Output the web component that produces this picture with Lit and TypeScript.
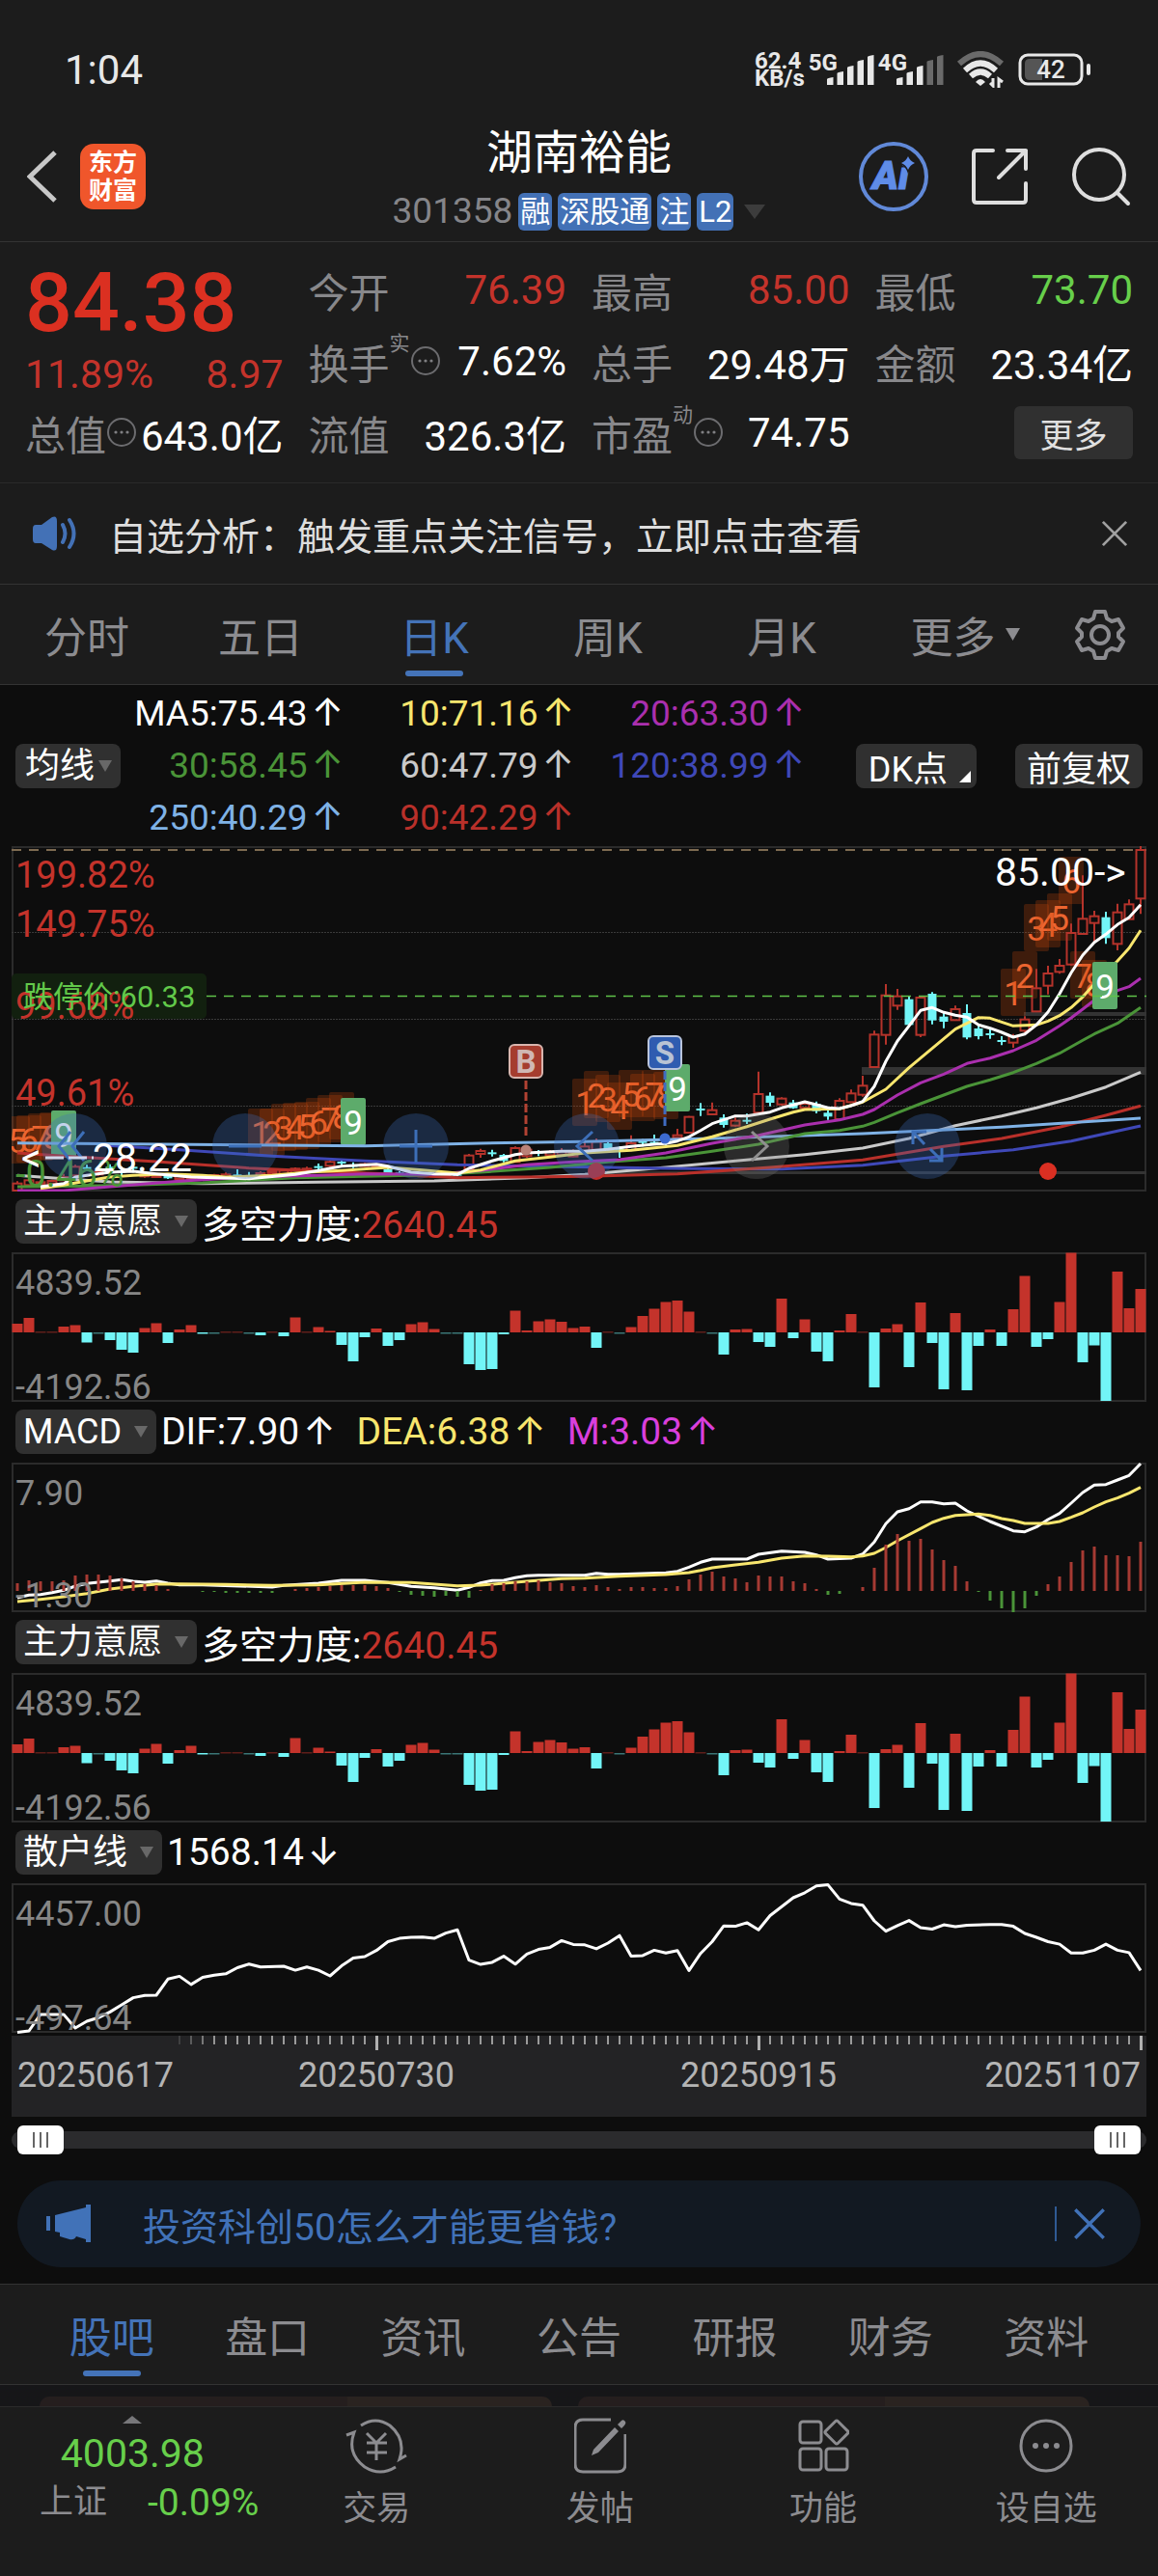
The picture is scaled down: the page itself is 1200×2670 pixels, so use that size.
import { LitElement, html, svg, css } from "lit";
import { customElement, property } from "lit/decorators.js";
import { classMap } from "lit/directives/class-map.js";

type Pt = [number, number];

const STEP = 12;
const mid = (i: number) => i * STEP + 6;

/* Bars of the capital-flow study, one per trading day, in chart units. */
const FLOW = [
  9, 15, 1, 1, 6, 7.5, -10.5, -1, -8, -18, -21, 4.5, 9.5, -11, 3, 7.5, -1.5, -1, 1, 1, -1, -3, 1, -4, 15.5, 1, 5.5, 1.5,
  -13, -30, -5, 4, -14, -8, 8.5, 10.5, 3.5, -1, -1, -33, -39, -38, -2, 22.5, 2, 11.5, 13.5, 11, 4.5, 6, -16, 1, -1, 5.5,
  17, 24.5, 31.5, 33, 21.5, 1, -1, -23, 3, 3.5, -10, -15, 35, -6, 13.5, -20, -30, 2, 19, 1, -57, 4, 8.5, -36, 31, -11,
  -59, 20, -60, -14, 3, -14, 24, 58.5, -15, -7, 31.5, 82.5, -31, -13.5, -71, 63, 25, 45,
];

const MACD_BARS = [
  8, 11, 10, 10, 11, 16, 17, 17, 16, 13, 10, 7, 6, 2, 0, 0, -1, -1, -2, -2, -2, -2, -2, 0, 2, 3, 4, 5, 6, 6, 6, 5, 3, -1,
  -4, -5, -6, -5, -6, -7, 1, 7, 8, 10, 10, 11, 9, 8, 5, 4, 6, 4, 2, 4, 4, 3, 3, 5, 12, 17, 20, 15, 13, 9, 16, 15, 15, 10,
  8, 2, -4, -3, 0, 4, 24, 48, 59, 52, 54, 43, 32, 26, 10, -1, -10, -18, -22, -18, -5, 7, 15, 30, 42, 46, 37, 37, 36, 51,
];

const flat = (values: number[], scale: number, shift: number): Pt[] => {
  const out: Pt[] = [];
  for (let k = 0; k < values.length; k += 2) out.push([mid(values[k]), values[k + 1] / scale - shift]);
  return out;
};

const DIF = flat([
  0, 1260, 1, 1252, 2, 1250, 3, 1244, 4, 1237, 5, 1224, 6, 1216, 7, 1212, 8, 1208, 9, 1204, 10, 1209, 11, 1212, 12, 1208,
  13, 1215, 14, 1220, 16, 1220, 22, 1227, 23, 1222, 26, 1215, 28, 1206, 30, 1206, 32, 1213, 34, 1225, 36, 1229, 38, 1237,
  39, 1228, 40, 1214, 41, 1207, 42, 1206, 43, 1198, 44, 1192, 45, 1190, 49, 1190, 50, 1184, 51, 1187, 52, 1187, 54, 1185,
  56, 1183, 57, 1178, 58, 1165, 59, 1150, 60, 1140, 63, 1140, 64, 1125, 66, 1115, 68, 1119, 69, 1127, 70, 1140, 72, 1137,
  73, 1124, 74, 1087, 75, 1030, 76, 993, 77, 983, 78, 962, 79, 962, 80, 968, 81, 966, 82, 990, 84, 1023, 86, 1052, 87,
  1055, 88, 1040, 89, 1017, 90, 998, 91, 966, 92, 933, 93, 910, 94, 908, 95, 894, 96, 880, 97, 843,
], 3, 280);
const DEA = flat([
  0, 1272, 2, 1265, 4, 1257, 6, 1247, 8, 1233, 10, 1225, 12, 1218, 14, 1217, 18, 1219, 22, 1222, 26, 1220, 30, 1212, 34,
  1213, 38, 1223, 40, 1221, 44, 1209, 47, 1201, 49, 1199, 52, 1193, 56, 1188, 58, 1182, 59, 1175, 60, 1167, 62, 1158, 64,
  1150, 66, 1137, 68, 1130, 70, 1131, 72, 1133, 73, 1130, 74, 1122, 75, 1104, 76, 1083, 78, 1045, 79, 1026, 80, 1013, 81,
  1004, 83, 1000, 84, 1004, 85, 1014, 86, 1020, 87, 1029, 89, 1029, 90, 1023, 91, 1010, 92, 996, 93, 978, 94, 962, 95,
  950, 96, 935, 97, 917,
], 3, 280);
const RETAIL = flat([
  0, 1177, 1, 1173, 2, 1127, 4, 1127, 5, 1165, 6, 1146, 7, 1136, 8, 1120, 9, 1100, 10, 1080, 11, 1074, 12, 1073, 13, 1028,
  14, 1020, 15, 1043, 16, 1023, 17, 1017, 18, 1013, 19, 996, 20, 986, 21, 994, 23, 992, 24, 1003, 25, 994, 26, 1003, 27,
  1019, 28, 991, 29, 969, 30, 965, 31, 948, 32, 923, 33, 914, 34, 911, 35, 910, 36, 914, 37, 899, 38, 890, 39, 975, 40,
  987, 41, 981, 42, 964, 43, 986, 44, 958, 45, 945, 46, 939, 47, 920, 48, 931, 49, 932, 50, 943, 51, 927, 52, 906, 53,
  964, 54, 962, 55, 947, 56, 955, 57, 948, 58, 1004, 59, 956, 60, 923, 61, 879, 62, 880, 63, 870, 64, 890, 65, 850, 66,
  825, 67, 800, 68, 786, 69, 767, 70, 764, 71, 804, 72, 816, 73, 821, 74, 865, 75, 894, 76, 878, 77, 864, 78, 884, 79,
  888, 80, 876, 81, 881, 82, 877, 84, 875, 85, 875, 86, 880, 87, 900, 88, 911, 89, 923, 90, 930, 91, 955, 92, 955, 93,
  947, 94, 930, 95, 947, 96, 954, 97, 1004,
], 2.703, 281);

/* Moving averages of the daily chart: index, level pairs. */
const AVERAGES: { color: string; pts: Pt[] }[] = [
  { color: "#c9c9c9", pts: flat([0, 1045, 4, 1055, 8, 1065, 16, 1070, 26, 1066, 36, 1062, 44, 1052, 49, 1042, 56, 1020, 62, 1000, 68, 980, 73, 960, 77, 930, 81, 890, 85, 860, 88, 835, 91, 805, 94, 770, 97, 724], 3, 7) },
  { color: "#3f48b8", pts: flat([7, 950, 14, 965, 22, 985, 30, 1000, 38, 1012, 46, 1017, 56, 1023, 66, 1025, 73, 1013, 80, 985, 86, 965, 91, 938, 97, 891], 3, 7) },
  { color: "#b9302a", pts: flat([0, 975, 4, 985, 12, 1002, 20, 1022, 26, 1032, 32, 1040, 38, 1052, 44, 1050, 49, 1048, 57, 1040, 65, 1020, 73, 997, 80, 955, 85, 930, 90, 895, 94, 858, 97, 829], 3, 7) },
  { color: "#7fb2e6", pts: flat([0, 944, 30, 953, 40, 945, 49, 940, 60, 930, 73, 915, 85, 895, 97, 867], 3, 7) },
  { color: "#4a9438", pts: flat([0, 1080, 6, 1078, 10, 1075, 16, 1068, 24, 1052, 34, 1045, 40, 1035, 46, 1020, 51, 1003, 56, 990, 60, 970, 64, 948, 68, 915, 71, 905, 73, 892, 74, 880, 76, 850, 78, 822, 80, 795, 82, 768, 84, 748, 86, 725, 88, 697, 90, 665, 92, 625, 93, 605, 95, 572, 97, 523], 3, 7) },
  { color: "#aa2fae", pts: flat([0, 1092, 4, 1092, 8, 1080, 14, 1063, 20, 1050, 26, 1045, 30, 1040, 36, 1042, 40, 1030, 44, 1012, 48, 1003, 52, 996, 56, 975, 60, 945, 64, 920, 68, 888, 71, 872, 73, 855, 74, 840, 76, 795, 78, 757, 80, 730, 82, 697, 84, 680, 86, 657, 88, 625, 90, 580, 91, 555, 92, 528, 93, 500, 94, 485, 95, 470, 96, 458, 97, 432], 3, 7) },
  { color: "#f8e66e", pts: flat([2, 1085, 4, 1075, 6, 1062, 8, 1050, 10, 1045, 13, 1040, 16, 1045, 18, 1050, 22, 1045, 25, 1035, 28, 1030, 32, 1020, 35, 1028, 38, 1038, 40, 1028, 43, 1000, 46, 988, 49, 975, 53, 967, 57, 952, 60, 925, 63, 893, 65, 870, 67, 848, 68, 840, 71, 838, 73, 817, 75, 777, 77, 710, 79, 650, 81, 590, 83, 554, 84, 556, 86, 580, 88, 577, 89, 565, 90, 548, 91, 523, 92, 490, 93, 450, 94, 415, 95, 378, 96, 338, 97, 283], 3, 7) },
  { color: "#ffffff", pts: flat([2, 1080, 4, 1070, 5, 1050, 6, 1045, 8, 1035, 10, 1032, 12, 1040, 15, 1050, 20, 1055, 24, 1042, 26, 1030, 28, 1016, 31, 1010, 32, 1016, 34, 1035, 36, 1040, 38, 1042, 39, 1023, 41, 1000, 43, 980, 44, 975, 47, 970, 49, 970, 51, 964, 53, 955, 55, 948, 56, 946, 57, 938, 58, 925, 59, 905, 60, 884, 61, 872, 62, 860, 63, 860, 64, 854, 65, 848, 66, 835, 67, 826, 68, 816, 69, 825, 70, 835, 71, 837, 72, 828, 73, 815, 74, 768, 75, 690, 76, 627, 77, 580, 78, 532, 79, 523, 80, 538, 81, 547, 82, 553, 83, 577, 84, 587, 85, 600, 86, 615, 87, 605, 88, 577, 89, 537, 90, 480, 91, 415, 92, 360, 93, 320, 94, 295, 95, 265, 96, 243, 97, 203], 3, 7) },
];

/* index, direction (1 up, 0 down), high, body top, body bottom, low */
const CANDLES = [
  [0, 1, 1063, 1070, 1092, 1092], [1, 1, 1055, 1060, 1075, 1080], [2, 1, 1060, 1066, 1072, 1076], [3, 1, 1058, 1062, 1070, 1074],
  [4, 1, 1040, 1050, 1060, 1062], [5, 1, 1012, 1018, 1045, 1048], [6, 0, 1012, 1019, 1024, 1030], [7, 1, 1028, 1034, 1042, 1046],
  [8, 0, 1010, 1018, 1026, 1034], [9, 0, 1018, 1030, 1034, 1046], [10, 0, 1010, 1018, 1024, 1036], [11, 1, 1036, 1042, 1048, 1052],
  [12, 1, 1038, 1044, 1050, 1052], [13, 0, 1042, 1044, 1054, 1056], [14, 1, 1044, 1048, 1056, 1058], [15, 1, 1046, 1050, 1056, 1060],
  [16, 1, 1044, 1050, 1054, 1058], [17, 1, 1040, 1044, 1050, 1054], [18, 1, 1036, 1042, 1050, 1052], [19, 0, 1026, 1042, 1047, 1056],
  [20, 0, 1034, 1044, 1048, 1056], [21, 1, 1032, 1038, 1046, 1050], [22, 1, 1026, 1032, 1038, 1042], [23, 1, 1026, 1030, 1040, 1042],
  [24, 1, 1020, 1024, 1038, 1040], [25, 1, 1018, 1024, 1034, 1036], [26, 0, 1008, 1016, 1021, 1030], [27, 1, 998, 1003, 1015, 1019],
  [28, 0, 994, 1002, 1007, 1014], [29, 0, 1004, 1012, 1016, 1022], [30, 1, 1006, 1010, 1016, 1018], [31, 1, 1008, 1012, 1018, 1022],
  [32, 0, 1022, 1026, 1040, 1044], [33, 0, 1032, 1036, 1042, 1046], [34, 1, 1034, 1040, 1046, 1048], [35, 1, 1036, 1042, 1048, 1050],
  [36, 1, 1038, 1042, 1048, 1050], [37, 1, 1034, 1038, 1046, 1048], [38, 0, 1034, 1038, 1046, 1048], [39, 1, 978, 983, 1025, 1028],
  [40, 1, 962, 969, 978, 990], [41, 0, 965, 973, 978, 986], [42, 0, 978, 981, 1000, 1004], [43, 1, 955, 960, 1003, 1005],
  [44, 1, 955, 965, 985, 990], [45, 0, 966, 971, 976, 985], [46, 1, 966, 972, 982, 984], [47, 1, 960, 970, 980, 984],
  [48, 1, 964, 974, 986, 988], [49, 1, 935, 955, 968, 972], [50, 1, 930, 940, 965, 970], [51, 0, 938, 945, 964, 970],
  [52, 0, 955, 962, 968, 990], [53, 1, 920, 945, 966, 970], [54, 0, 932, 938, 943, 955], [55, 0, 918, 941, 948, 950],
  [56, 0, 925, 935, 945, 950], [57, 1, 900, 920, 928, 934], [58, 1, 860, 863, 912, 914], [59, 0, 820, 837, 843, 860],
  [60, 1, 818, 842, 855, 858], [61, 0, 855, 865, 888, 896], [62, 1, 865, 875, 890, 893], [63, 0, 853, 872, 877, 885],
  [64, 1, 722, 792, 850, 850], [65, 0, 787, 797, 819, 830], [66, 1, 802, 806, 824, 828], [67, 0, 810, 818, 836, 838],
  [68, 1, 815, 822, 835, 838], [69, 0, 815, 822, 845, 852], [70, 0, 840, 850, 862, 872], [71, 1, 805, 813, 870, 875],
  [72, 1, 778, 790, 817, 820], [73, 1, 735, 766, 794, 800], [74, 1, 595, 607, 708, 710], [75, 1, 450, 485, 608, 638],
  [76, 1, 465, 488, 517, 530], [77, 0, 487, 497, 577, 577], [78, 1, 490, 492, 608, 615], [79, 0, 475, 480, 563, 575],
  [80, 0, 535, 551, 567, 587], [81, 1, 517, 528, 562, 563], [82, 0, 513, 540, 616, 622], [83, 0, 575, 588, 612, 622],
  [84, 0, 590, 603, 608, 620], [85, 0, 612, 624, 630, 640], [86, 1, 605, 612, 632, 648], [87, 1, 550, 560, 595, 600],
  [88, 1, 403, 463, 535, 537], [89, 1, 393, 417, 455, 482], [90, 1, 372, 393, 412, 418], [91, 1, 262, 291, 389, 392],
  [92, 1, 112, 247, 294, 296], [93, 1, 222, 239, 260, 318], [94, 0, 225, 242, 307, 325], [95, 1, 200, 227, 325, 345],
  [96, 1, 187, 202, 248, 250], [97, 1, 20, 33, 184, 232],
];

/* Nine-turn counts: first candle, first digit, top of each plate. */
const RUNS = [
  { start: 0, digit: 5, tops: [280, 279, 277, 276, 274] },
  { start: 21, digit: 1, tops: [272, 272, 267, 266, 265, 261, 258, 255, 261] },
  { start: 49, digit: 1, tops: [241, 233, 237, 245, 232, 236, 232, 234, 226] },
  { start: 86, digit: 1, tops: [127, 109, 60, 56, 49, 11, 109, 118] },
];

const line = (pts: Pt[], color: string, width = 3) =>
  svg`<polyline points=${pts.map(([x, y]) => `${x},${y.toFixed(1)}`).join(" ")} fill="none" stroke=${color} stroke-width=${width} stroke-linejoin="round"/>`;

const RED = "#c4332b";
const CYAN = "#72f5f7";

const chartText = css`
  :host { display: block; }
  svg { display: block; width: 100%; height: auto; overflow: visible; }
  .frame { fill: none; stroke: #2b2b2b; stroke-width: 2; }
  .lbl { font-size: 36px; fill: #868686; }
`;

@customElement("day-chart")
class DayChart extends LitElement {
  static styles = [
    chartText,
    css`
      .grid { stroke: #3a3a3a; stroke-width: 1; stroke-dasharray: 2 1; }
      .pct { font-size: 38px; fill: #c4332b; }
      .down { fill: #4a9438; }
      .mark { font-size: 41px; fill: #fff; }
      .limit { font-size: 31px; fill: #62c94a; }
      .turn { font-size: 35px; text-anchor: middle; fill: #ec6530; }
      .nine { fill: #fff; }
      .flag { font-size: 33px; font-weight: 700; text-anchor: middle; }
      .ctl { fill: none; stroke: #3d6fb8; stroke-width: 3; }
      .off { stroke: #8f8f8f; }
    `,
  ];

  private candle([i, up, h, t, b, l]: number[]) {
    const y = (v: number) => v / 3 - 7;
    const x = mid(i);
    const body = Math.max(y(b) - y(t), 2);
    return up
      ? svg`<path d="M${x} ${y(h)}V${y(t)}M${x} ${y(t) + body}V${y(l)}" stroke="#b5332b" stroke-width="2"/>
          <rect x=${x - 4.5} y=${y(t)} width="9" height=${body} fill="none" stroke="#b5332b" stroke-width="2"/>`
      : svg`<path d="M${x} ${y(h)}V${y(l)}" stroke=${CYAN} stroke-width="2"/>
          <rect x=${x - 4.5} y=${y(t)} width="9" height=${body} fill=${CYAN}/>`;
  }

  private run(r: { start: number; digit: number; tops: number[] }) {
    return r.tops.map((top, k) => {
      const n = r.digit + k;
      const x = mid(r.start + k);
      return svg`<rect x=${x - 13} y=${top} width="26" height="49" rx="2" fill=${n === 9 ? "#5dab6b" : "rgba(205,72,12,.26)"}/>
        <text class=${n === 9 ? "turn nine" : "turn"} x=${x} y=${top + 38}>${n}</text>`;
    });
  }

  render() {
    return html`<svg viewBox="0 0 1176 358" role="img" aria-label="日K">
      <clipPath id="box"><rect x="0" y="0" width="1176" height="358"/></clipPath>
      <rect class="frame" x="1" y="1" width="1174" height="356"/>
      <path class="grid" d="M0 89.500H1176M0 179.500H1176M0 269.500H1176"/>
      <path d="M0 4H1176" stroke="#7d6a50" stroke-width="2" stroke-dasharray="10 8"/>
      <g clip-path="url(#box)">
        <path d="M881 233H1176" stroke="#333" stroke-width="8"/>
        <path d="M1049 174H1176" stroke="#333" stroke-width="4"/>
        <path d="M606 338.500H1176" stroke="#333" stroke-width="3"/>
        ${RUNS.map((r) => this.run(r))}
        ${CANDLES.map((c) => this.candle(c))}
        ${AVERAGES.map((a) => line(a.pts, a.color))}
        <rect x="1120" y="120" width="26" height="49" rx="2" fill="#5dab6b"/>
        <text class="turn nine" x="1133" y="158">9</text>
      </g>
      <rect x="0" y="132" width="202" height="47" rx="5" fill="#12200f"/>
      <text class="pct" x="4" y="43">199.82%</text>
      <text class="pct" x="4" y="94">149.75%</text>
      <text class="pct" x="4" y="179">99.68%</text>
      <text class="pct" x="4" y="269">49.61%</text>
      <text class="pct down" x="4" y="353">-0.46%</text>
      <text class="limit" x="12" y="167">跌停价:60.33</text>
      <path d="M202 155.500H1176" stroke="#5fc24a" stroke-width="1.500" stroke-dasharray="10 8"/>
      <text class="mark" x="1019" y="41">85.00-&gt;</text>

      <path d="M533 243V300" stroke="#b24233" stroke-width="3" stroke-dasharray="9 3"/>
      <circle cx="533" cy="315" r="5.500" fill="#b98278"/>
      <rect x="516" y="206" width="34" height="34" rx="5" fill="#a53d2f" stroke="#d8b5ae" stroke-width="2"/>
      <text class="flag" x="533" y="235" fill="#d0b8b4">B</text>
      <path d="M677 233V290" stroke="#3f6bc0" stroke-width="3" stroke-dasharray="9 3"/>
      <circle cx="677" cy="303" r="5.500" fill="#3c6ad0"/>
      <rect x="660" y="197" width="34" height="34" rx="5" fill="#2f5cb0" stroke="#b9c4dc" stroke-width="2"/>
      <text class="flag" x="677" y="226" fill="#b9c3d4">S</text>

      <circle cx="606" cy="337" r="9" fill="#c32c2a"/>
      <circle cx="1074" cy="337" r="9" fill="#da2f22"/>
      ${[65, 242, 419, 596, 772, 949].map(
        (x) => svg`<circle cx=${x} cy="311" r="34" fill=${x === 772 ? "rgba(130,130,130,.26)" : "rgba(58,108,190,.3)"}/>`
      )}
      <path class="ctl" d="M61 296 49 311 61 326M75 296 63 311 75 326"/>
      <path class="ctl" d="M225 311H259"/>
      <path class="ctl" d="M402 311H436M419 294V328"/>
      <path class="ctl" d="M602 296 586 311 602 326"/>
      <path class="ctl off" d="M767 296 783 311 767 326"/>
      <path class="ctl" d="M934 309V296H948M935 297 946 309M964 313V326H951M963 325 952 314"/>
      <text class="mark" x="10" y="337">&lt;</text>
      <path d="M35 323H85" stroke="#cfd6ea" stroke-width="3" stroke-dasharray="19 5"/>
      <text class="mark" x="84" y="337">28.22</text>
    </svg>`;
  }
}

@customElement("flow-chart")
class FlowChart extends LitElement {
  static styles = chartText;
  render() {
    return html`<svg viewBox="0 0 1176 155" role="img" aria-label="多空力度">
      <rect class="frame" x="1" y="1" width="1174" height="153"/>
      ${FLOW.map((v, i) => {
        const dim = Math.abs(v) <= 1;
        return svg`<rect x=${i * STEP + 0.5} y=${v > 0 ? 83 - v : 83} width="11" height=${dim ? 1.5 : Math.abs(v)}
          fill=${v > 0 ? RED : CYAN} opacity=${dim ? 0.45 : 1}/>`;
      })}
      <text class="lbl" x="4" y="44">4839.52</text>
      <text class="lbl" x="4" y="152">-4192.56</text>
    </svg>`;
  }
}

@customElement("macd-chart")
class MacdChart extends LitElement {
  static styles = chartText;
  render() {
    return html`<svg viewBox="0 0 1176 155" role="img" aria-label="MACD">
      <rect class="frame" x="1" y="1" width="1174" height="153"/>
      ${line(DIF, "#fff")} ${line(DEA, "#f8e66e")}
      ${MACD_BARS.map(
        (v, i) => svg`<rect x=${mid(i) - 1.5} y=${v > 0 ? 133 - v : 133} width="3" height=${Math.abs(v)} fill=${v > 0 ? "#a63a33" : "#4a9438"}/>`
      )}
      <text class="lbl" x="4" y="44">7.90</text>
      <text class="lbl" x="4" y="150">-1.30</text>
    </svg>`;
  }
}

@customElement("retail-chart")
class RetailChart extends LitElement {
  static styles = chartText;
  render() {
    return html`<svg viewBox="0 0 1176 155" role="img" aria-label="散户线">
      <rect class="frame" x="1" y="1" width="1174" height="153"/>
      ${line(RETAIL, "#fff")}
      <text class="lbl" x="4" y="44">4457.00</text>
      <text class="lbl" x="4" y="152">-497.64</text>
    </svg>`;
  }
}

@customElement("date-axis")
class DateAxis extends LitElement {
  static styles = [chartText, css`.date { font-size: 36px; fill: #b4b4b4; } .m { text-anchor: middle; } .e { text-anchor: end; }`];
  render() {
    const ticks = Array.from({ length: 84 }, (_, k) => k + 14);
    return html`<svg viewBox="0 0 1176 84" role="img" aria-label="日期">
      <rect width="1176" height="84" fill="#232325"/>
      ${ticks.map((i) => {
        const major = i === 31 || i === 64 || i === 97;
        return svg`<rect x=${mid(i) - 1} y="0" width=${major ? 3 : 2} height=${major ? 15 : 9} fill="#b0b0b0" opacity=${major ? 1 : Math.min(0.85, (i - 13) * 0.2)}/>`;
      })}
      <text class="date" x="6" y="53">20250617</text>
      <text class="date m" x="378" y="53">20250730</text>
      <text class="date m" x="774" y="53">20250915</text>
      <text class="date e" x="1170" y="53">20251107</text>
    </svg>`;
  }
}

@customElement("study-picker")
class StudyPicker extends LitElement {
  @property() name = "";
  @property({ type: Boolean, reflect: true }) tight = false;
  static styles = css`
    :host { display: inline-grid; align-items: center; }
    select, svg { grid-area: 1 / 1; }
    select {
      appearance: none; border: 0; margin: 0; height: 46px; padding: 0 35px 0 8px; border-radius: 8px;
      background: #303030; color: #fff; font: inherit; font-size: 36px;
    }
    :host([tight]) select { padding: 0 26px 0 10px; }
    svg { justify-self: end; width: 14px; height: 12px; margin-right: 9px; pointer-events: none; }
  `;
  render() {
    return html`<select aria-label="指标"><option>${this.name}</option></select>
      <svg viewBox="0 0 14 12"><path d="M0 0H14L7 12Z" fill="#686868"/></svg>`;
  }
}

const cross = (size: number, color: string, w: number) => html`<svg width=${size} height=${size} viewBox="0 0 30 30">
  <path d="M2 2 28 28M28 2 2 28" fill="none" stroke=${color} stroke-width=${w}/></svg>`;
const info = html`<svg class="info" width="32" height="32" viewBox="0 0 32 32"><circle cx="16" cy="16" r="14" fill="none" stroke="#6c6c6f" stroke-width="2"/>
  <circle cx="10" cy="16" r="1.600" fill="#808083"/><circle cx="16" cy="16" r="1.600" fill="#808083"/><circle cx="22" cy="16" r="1.600" fill="#808083"/></svg>`;

const signal = (lit: number) => html`<svg width="49" height="32" viewBox="0 0 49 32">
  ${[8, 14, 20, 26, 31].map(
    (h, i) => svg`<path d="M${i * 10.5} 32V${34 - h}Q${i * 10.5} ${33 - h} ${i * 10.5 + 6.5} ${32 - h}V32Z" fill=${i < lit ? "#e8e8e8" : "#6a6a6a"}/>`
  )}</svg>`;

@customElement("app-root")
class AppRoot extends LitElement {
  static styles = css`
    :host {
      display: block; background: #0d0d0d; color: #fff;
      font-family: Roboto, "Noto Sans CJK SC", sans-serif; font-size: 39px;
    }
    * { box-sizing: border-box; }
    svg { display: block; flex: none; }
    button, a { font: inherit; color: inherit; background: none; border: 0; padding: 0; margin: 0; text-decoration: none; }
    h1, p, dl, dd, dt { margin: 0; font-weight: 400; }
    .row { display: flex; align-items: center; }
    .panel { background: #1c1c1c; }

    .status { padding: 48px 69px 0 67px; height: 96px; color: #e8e8e8; justify-content: space-between; }
    .clock { font-size: 42px; }
    .sys { gap: 4px; font-weight: 700; font-size: 24px; line-height: 18px; }
    .cell { display: flex; align-items: flex-end; }
    .gen { align-self: flex-start; margin-right: -11px; }
    .wifi { margin: 0 10px 0 9px; }

    .head {
      display: grid; grid-template-columns: 1fr auto 1fr; align-items: center;
      padding: 27px 28px 7px; border-bottom: 1px solid #333;
    }
    .left { gap: 24px; }
    .brand {
      width: 68px; height: 68px; border-radius: 14px; background: #f0562b; font-weight: 700; font-size: 25px;
      line-height: 29px; padding: 5px 0; text-align: center;
    }
    h1 { font-size: 48px; line-height: 72px; text-align: center; }
    .code { gap: 6px; line-height: 48px; font-size: 37px; color: #858589; }
    .tag { background: #4371b6; color: #fff; border-radius: 6px; font-size: 31px; line-height: 39px; padding: 0 2px; }
    .caret { margin-left: 5px; }
    .right { gap: 44px; justify-content: flex-end; }

    .quote {
      display: grid; grid-template-columns: repeat(4, 1fr); grid-auto-rows: 74px; column-gap: 26px;
      padding: 12px 26px 15px; border-bottom: 1px solid #2a2a2a; font-size: 42px;
    }
    .last { grid-row: span 2; color: #db3021; }
    .price { font-size: 86px; font-weight: 500; line-height: 102px; }
    .change { display: flex; justify-content: space-between; line-height: 46px; color: #c4332b; font-size: 41px; }
    .item { display: flex; align-items: center; justify-content: space-between; white-space: nowrap; }
    .item dt { display: flex; align-items: center; color: #88888b; }
    .sup { font-size: 21px; align-self: flex-start; line-height: 24px; }
    .up { color: #c4332b; }
    .dn { color: #67cf4b; }
    .more { justify-self: end; align-self: center; width: 123px; height: 55px; border-radius: 6px; background: #303030; font-size: 35px; color: #e0e0e0; }

    .notice { height: 105px; padding: 0 31px 0 34px; border-bottom: 1px solid #333; gap: 33px; color: #dedede; }
    .grow { flex: 1; }

    .tabs { display: grid; grid-template-columns: repeat(6, 3fr) 2fr; height: 104px; border-bottom: 1px solid #333; font-size: 44px; color: #8c8c90; }
    .tab { display: flex; align-items: center; justify-content: center; gap: 10px; position: relative; white-space: nowrap; }
    .wide { padding-left: 20px; }
    .on { color: #4473b8; }
    .on::after { content: ""; position: absolute; left: calc(50% - 30px); bottom: 8px; width: 60px; height: 6px; border-radius: 3px; background: #4473b8; }

    .legend { padding: 3px 16px 2px; }
    .mas { flex: 0 1 709px; display: grid; grid-template-columns: 231fr 239fr 239fr; font-size: 37px; line-height: 54px; text-align: right; white-space: nowrap; }
    .arrow { font-family: Inter, "Liberation Sans", sans-serif; font-size: 40px; line-height: 1; margin-left: 4px; }
    .opts { flex: 1; display: flex; justify-content: flex-end; gap: 40px; }
    .chip { height: 46px; border-radius: 8px; background: #303030; font-size: 36px; padding: 0 12px; white-space: nowrap; display: flex; align-items: center; }
    .dk { padding: 0 6px 0 13px; gap: 12px; }
    .dk svg { align-self: flex-end; margin-bottom: 6px; }

    .charts { padding: 0 12px; }
    .study { padding: 8px 4px 9px; gap: 5px; height: 63px; white-space: nowrap; }
    .vals { display: flex; gap: 22px; }
    .axis { padding-top: 3px; }

    .scrub { display: grid; align-items: center; margin: 9px 12px 0; }
    .scrub::before { content: ""; grid-area: 1 / 1; height: 18px; border-radius: 9px; background: #2b2b2d; }
    .scrub input { grid-area: 1 / 1; appearance: none; background: none; margin: 0 6px; height: 30px; pointer-events: none; }
    .scrub input::-webkit-slider-thumb {
      appearance: none; width: 48px; height: 30px; border-radius: 6px; pointer-events: auto; border: 0;
      background:
        linear-gradient(#666, #666) 16px 7px / 2px 16px no-repeat,
        linear-gradient(#666, #666) 23px 7px / 2px 16px no-repeat,
        linear-gradient(#666, #666) 30px 7px / 2px 16px no-repeat, #fff;
    }

    .promo { margin: 27px 18px 17px; height: 90px; border-radius: 45px; background: #121922; color: #4172b8; padding: 0 36px 0 30px; }
    .promo a { flex: 1; display: flex; align-items: center; gap: 54px; }
    .promo button { border-left: 2px solid #2f5a94; padding-left: 17px; height: 36px; }

    .forum { display: grid; grid-template-columns: repeat(7, 1fr); height: 105px; padding: 0 35px; border-top: 1px solid #333; border-bottom: 1px solid #333; font-size: 44px; color: #8c8c90; }
    .peek { display: grid; grid-template-columns: 1fr 1fr; gap: 27px; padding: 12px 71px 0 41px; background: #161618; }
    .card { height: 10px; border-radius: 20px 20px 0 0; background: linear-gradient(90deg, #251e1e 60%, #2a2320 60%); }

    .nav { display: grid; grid-template-columns: 19fr repeat(4, 16fr); height: 176px; border-top: 1px solid #2a2a2a; color: #8c8c90; font-size: 35px; }
    .index { padding-top: 8px; display: flex; flex-direction: column; align-items: center; }
    .point { color: #67cf4b; font-size: 41px; line-height: 62px; }
    .pair { align-self: stretch; display: flex; padding-left: 41px; gap: 42px; line-height: 40px; white-space: nowrap; }
    .pct { color: #67cf4b; font-size: 39px; }
    .act { display: flex; flex-direction: column; align-items: center; padding-top: 11px; gap: 12px; line-height: 50px; }
  `;

  private quoteItem(label: string, value: string, tone = "", sup = "", dots = false) {
    return html`<div class="item"><dt>${label}${sup ? html`<span class="sup">${sup}</span>` : ""}${dots ? info : ""}</dt>
      <dd class=${tone}>${value}</dd></div>`;
  }

  private level(text: string, color: string, arrow = "↑") {
    return html`<span style="color:${color}">${text}<span class="arrow">${arrow}</span></span>`;
  }

  render() {
    return html`
      <div class="panel">
        <div class="status row">
          <span class="clock">1:04</span>
          <div class="sys row">
            <span>62.4<br />KB/s</span>
            <span class="cell"><span class="gen">5G</span>${signal(5)}</span>
            <span class="cell"><span class="gen">4G</span>${signal(3)}</span>
            <svg class="wifi" width="50" height="38" viewBox="0 0 50 38" fill="none" stroke-width="6">
              <path d="M3 13Q25 -7 47 13" stroke="#6a6a6a"/>
              <path d="M9 20Q25 5 41 20" stroke="#e8e8e8"/>
              <path d="M15 26Q25 17 35 26" stroke="#e8e8e8"/>
              <path d="M20 32Q25 26 30 32L25 36Z" fill="#e8e8e8"/>
              <path d="M38 28V36L35 33M44 38V29L48 32" stroke="#e8e8e8" stroke-width="3"/>
            </svg>
            <svg width="76" height="34" viewBox="0 0 76 34">
              <rect x="2" y="2" width="64" height="30" rx="8" fill="none" stroke="#e8e8e8" stroke-width="3"/>
              <path d="M12 6H25V28H12Q7 28 7 23V11Q7 6 12 6Z" fill="#555"/>
              <rect x="71" y="11" width="4" height="12" rx="2" fill="#e8e8e8"/>
              <text x="34" y="26" text-anchor="middle" font-size="26" font-weight="500" fill="#e8e8e8">42</text>
            </svg>
          </div>
        </div>

        <header class="head">
          <div class="left row">
            <button aria-label="返回"><svg width="31" height="56" viewBox="0 0 31 56"><path d="M29 3 3 28 29 53" fill="none" stroke="#c8c8c8" stroke-width="5"/></svg></button>
            <div class="brand">东方<br />财富</div>
          </div>
          <div>
            <h1>湖南裕能</h1>
            <div class="code row">
              <span>301358</span><span class="tag">融</span><span class="tag">深股通</span><span class="tag">注</span><span class="tag">L2</span>
              <svg class="caret" width="22" height="15" viewBox="0 0 22 15"><path d="M0 0H22L11 15Z" fill="#3c3c3c"/></svg>
            </div>
          </div>
          <div class="right row">
            <button aria-label="Ai"><svg width="72" height="72" viewBox="0 0 72 72">
              <circle cx="36" cy="36" r="34" fill="none" stroke="#6189d8" stroke-width="4"/>
              <text x="33" y="49" text-anchor="middle" font-size="41" font-weight="900" font-style="italic" fill="#5f8ce8" stroke="#5f8ce8">Ai</text>
              <path d="M51 15Q53 20 58 22Q53 24 51 29Q49 24 44 22Q49 20 51 15Z" fill="#5f8ce8" stroke="#1c1c1c" stroke-width="3" paint-order="stroke"/>
            </svg></button>
            <button aria-label="分享"><svg width="60" height="60" viewBox="0 0 60 60" fill="none" stroke="#dedede" stroke-width="4" stroke-linecap="round" stroke-linejoin="round">
              <path d="M23 3H6Q3 3 3 6V54Q3 57 6 57H54Q57 57 57 54V37M38 3H57V22M57 3 29 31"/></svg></button>
            <button aria-label="搜索"><svg width="62" height="62" viewBox="0 0 62 62" fill="none" stroke="#dedede" stroke-width="4" stroke-linecap="round">
              <circle cx="29" cy="29" r="26"/><path d="M48 48 59 59"/></svg></button>
          </div>
        </header>

        <dl class="quote">
          <div class="last">
            <dd class="price">84.38</dd>
            <dd class="change"><span>11.89%</span><span>8.97</span></dd>
          </div>
          ${this.quoteItem("今开", "76.39", "up")} ${this.quoteItem("最高", "85.00", "up")} ${this.quoteItem("最低", "73.70", "dn")}
          ${this.quoteItem("换手", "7.62%", "", "实", true)} ${this.quoteItem("总手", "29.48万")} ${this.quoteItem("金额", "23.34亿")}
          ${this.quoteItem("总值", "643.0亿", "", "", true)} ${this.quoteItem("流值", "326.3亿")} ${this.quoteItem("市盈", "74.75", "", "动", true)}
          <button class="more">更多</button>
        </dl>

        <div class="notice row">
          <svg width="46" height="36" viewBox="0 0 46 36"><path d="M3 9H9L20 1Q25 -1 25 5V31Q25 37 20 35L9 28H3Q0 28 0 24V13Q0 9 3 9Z" fill="#4371b6"/>
            <path d="M31 9Q36 18 31 27M38 4Q47 18 38 32" fill="none" stroke="#4371b6" stroke-width="4" stroke-linecap="round"/></svg>
          <span class="grow">自选分析：触发重点关注信号，立即点击查看</span>
          <button aria-label="关闭">${cross(28, "#a0a0a0", 3)}</button>
        </div>

        <nav class="tabs">
          ${["分时", "五日", "日K", "周K", "月K"].map((t) => html`<a href="#" class=${classMap({ tab: true, on: t === "日K" })}>${t}</a>`)}
          <a href="#" class="tab wide">更多<svg width="15" height="13" viewBox="0 0 15 13"><path d="M0 0H15L7.500 13Z" fill="#8c8c90"/></svg></a>
          <button class="tab" aria-label="设置"><svg width="54" height="54" viewBox="0 0 54 54" fill="none" stroke="#8c8c90" stroke-width="4" stroke-linejoin="round">
            <path d="M22 3H32L34 10L39 13L46 11L51 20L46 25V29L51 34L46 43L39 41L34 44L32 51H22L20 44L15 41L8 43L3 34L8 29V25L3 20L8 11L15 13L20 10Z"/>
            <circle cx="27" cy="27" r="9"/></svg></button>
        </nav>
      </div>

      <div class="legend row">
        <study-picker tight name="均线"></study-picker>
        <div class="mas">
          ${this.level("MA5:75.43", "#ffffff")} ${this.level("10:71.16", "#f8e66e")} ${this.level("20:63.30", "#aa2fae")}
          ${this.level("30:58.45", "#4a9438")} ${this.level("60:47.79", "#c9c9c9")} ${this.level("120:38.99", "#3f48b8")}
          ${this.level("250:40.29", "#7fb2e6")} ${this.level("90:42.29", "#b9302a")}
        </div>
        <div class="opts">
          <button class="chip dk">DK点<svg width="12" height="12" viewBox="0 0 12 12"><path d="M12 0V12H0Z" fill="#fff"/></svg></button>
          <button class="chip">前复权</button>
        </div>
      </div>

      <main class="charts">
        <day-chart></day-chart>
        <div class="study row"><study-picker name="主力意愿"></study-picker><span>多空力度:<span class="up">2640.45</span></span></div>
        <flow-chart></flow-chart>
        <div class="study row"><study-picker name="MACD"></study-picker>
          <span class="vals">${this.level("DIF:7.90", "#ffffff")}${this.level("DEA:6.38", "#f8e66e")}${this.level("M:3.03", "#d93fdc")}</span></div>
        <macd-chart></macd-chart>
        <div class="study row"><study-picker name="主力意愿"></study-picker><span>多空力度:<span class="up">2640.45</span></span></div>
        <flow-chart></flow-chart>
        <div class="study row"><study-picker name="散户线"></study-picker>${this.level("1568.14", "#ffffff", "↓")}</div>
        <retail-chart></retail-chart>
        <date-axis class="axis"></date-axis>
      </main>

      <div class="scrub">
        <input type="range" min="0" max="100" value="0" aria-label="起始日期" />
        <input type="range" min="0" max="100" value="100" aria-label="结束日期" />
      </div>

      <div class="promo row">
        <a href="#"><svg width="46" height="40" viewBox="0 0 46 40" fill="#4172b8"><path d="M0 12H4V27H0ZM9 11 41 3V0H46V39H41V36L31 33Q29 37 24 36L14 33V29L9 28Z"/></svg>投资科创50怎么才能更省钱?</a>
        <button aria-label="关闭">${cross(34, "#4172b8", 3)}</button>
      </div>

      <div class="panel">
        <nav class="forum">
          ${["股吧", "盘口", "资讯", "公告", "研报", "财务", "资料"].map((t, i) => html`<a href="#" class=${classMap({ tab: true, on: i === 0 })}>${t}</a>`)}
        </nav>
        <div class="peek"><div class="card"></div><div class="card"></div></div>
        <nav class="nav">
          <a href="#" class="index">
            <svg width="20" height="9" viewBox="0 0 20 9"><path d="M10 1 20 9H0Z" fill="#77777a"/></svg>
            <span class="point">4003.98</span>
            <span class="pair"><span>上证</span><span class="pct">-0.09%</span></span>
          </a>
          <a href="#" class="act"><svg width="64" height="58" viewBox="0 0 64 58" fill="none" stroke="#8c8c90" stroke-width="3">
            <path d="M16 8Q31 -2 46 8Q63 22 56 43L63 39M52 51Q36 61 20 51Q1 37 9 15L1 18"/>
            <path d="M22 16 32 26 42 16M32 26V44M22 26H43M22 36H43"/></svg>交易</a>
          <a href="#" class="act"><svg width="54" height="58" viewBox="0 0 54 58"><path d="M38 2H9Q1 2 1 10V48Q1 56 9 56H45Q53 56 53 48V17" fill="none" stroke="#8c8c90" stroke-width="3"/>
            <path d="M42 10 46 14 25 36 18 39 20 33ZM45 7 49 3Q51 1 53 4Q54 6 52 8L49 11Z" fill="#8c8c90"/></svg>发帖</a>
          <a href="#" class="act"><svg width="54" height="58" viewBox="0 0 54 58" fill="none" stroke="#8c8c90" stroke-width="3">
            <rect x="3" y="4" width="22" height="22" rx="3"/><rect x="3" y="32" width="22" height="22" rx="3"/><rect x="30" y="32" width="22" height="22" rx="3"/>
            <rect x="32" y="6" width="18" height="18" rx="2" transform="rotate(45 41 15)"/></svg>功能</a>
          <a href="#" class="act"><svg width="58" height="58" viewBox="0 0 58 58" fill="#8c8c90"><circle cx="29" cy="29" r="26" fill="none" stroke="#8c8c90" stroke-width="3"/>
            <circle cx="18" cy="29" r="3"/><circle cx="29" cy="29" r="3"/><circle cx="40" cy="29" r="3"/></svg>设自选</a>
        </nav>
      </div>
    `;
  }
}
